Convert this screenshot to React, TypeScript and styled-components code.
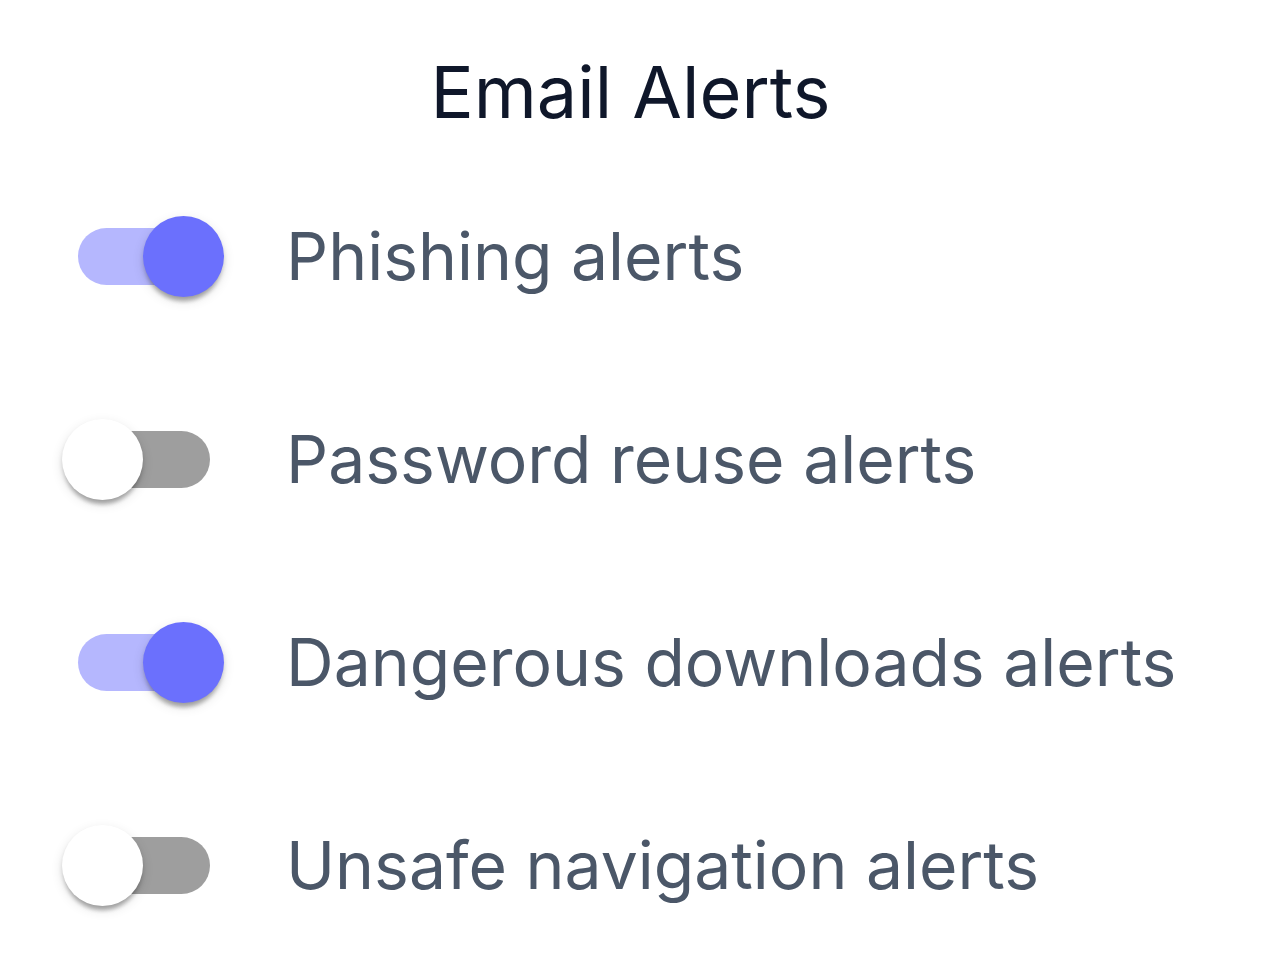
import React, { useState } from 'react'
import styled, { createGlobalStyle } from 'styled-components'

const GlobalStyle = createGlobalStyle`
  body {
    margin: 0;
    background: #ffffff;
    font-family: Inter, 'Noto Sans', sans-serif;
  }
`

const alerts = [
  { id: 'phishing', label: 'Phishing alerts', on: true },
  { id: 'reuse', label: 'Password reuse alerts', on: false },
  { id: 'downloads', label: 'Dangerous downloads alerts', on: true },
  { id: 'navigation', label: 'Unsafe navigation alerts', on: false },
]

const App = () => {
  const [state, setState] = useState(alerts)

  const toggle = (id: string) =>
    setState((prev) => prev.map((a) => (a.id === id ? { ...a, on: !a.on } : a)))

  return (
    <>
      <GlobalStyle />
      <Page>
        <Title>Email Alerts</Title>
        <List>
          {state.map((a) => (
            <Row key={a.id}>
              <Switch
                role="switch"
                aria-checked={a.on}
                onClick={() => toggle(a.id)}
              >
                <Track $on={a.on} />
                <Thumb $on={a.on} />
              </Switch>
              <Label>{a.label}</Label>
            </Row>
          ))}
        </List>
      </Page>
    </>
  )
}

export default App

// Styled Components

const Page = styled.div`
  width: 100%;
  padding-top: 48px;
  display: flex;
  flex-direction: column;
`

const Title = styled.h1`
  margin: 0;
  text-align: center;
  font-size: 72px;
  line-height: 88px;
  font-weight: 400;
  color: #0f172a;
`

const List = styled.div`
  display: flex;
  flex-direction: column;
  padding: 19px 0 0 62px;
`

const Row = styled.div`
  height: 203px;
  display: flex;
  align-items: center;
  gap: 62px;
`

const Switch = styled.button`
  position: relative;
  flex: none;
  width: 162px;
  height: 81px;
  padding: 0;
  border: none;
  background: transparent;
  cursor: pointer;
`

const Track = styled.span<{ $on: boolean }>`
  position: absolute;
  left: 16px;
  top: 12px;
  width: 132px;
  height: 57px;
  border-radius: 29px;
  background: ${(p) => (p.$on ? '#6b70fd' : '#000000')};
  opacity: ${(p) => (p.$on ? 0.5 : 0.38)};
`

const Thumb = styled.span<{ $on: boolean }>`
  position: absolute;
  top: 0;
  left: ${(p) => (p.$on ? '81px' : '0')};
  width: 81px;
  height: 81px;
  border-radius: 50%;
  background: ${(p) => (p.$on ? '#6b70fd' : '#ffffff')};
  box-shadow: 0 8px 4px -4px rgba(0, 0, 0, 0.2), 0 4px 4px rgba(0, 0, 0, 0.14),
    0 4px 12px rgba(0, 0, 0, 0.12);
`

const Label = styled.span`
  font-size: 66px;
  line-height: 1.2;
  color: #4b5768;
`
